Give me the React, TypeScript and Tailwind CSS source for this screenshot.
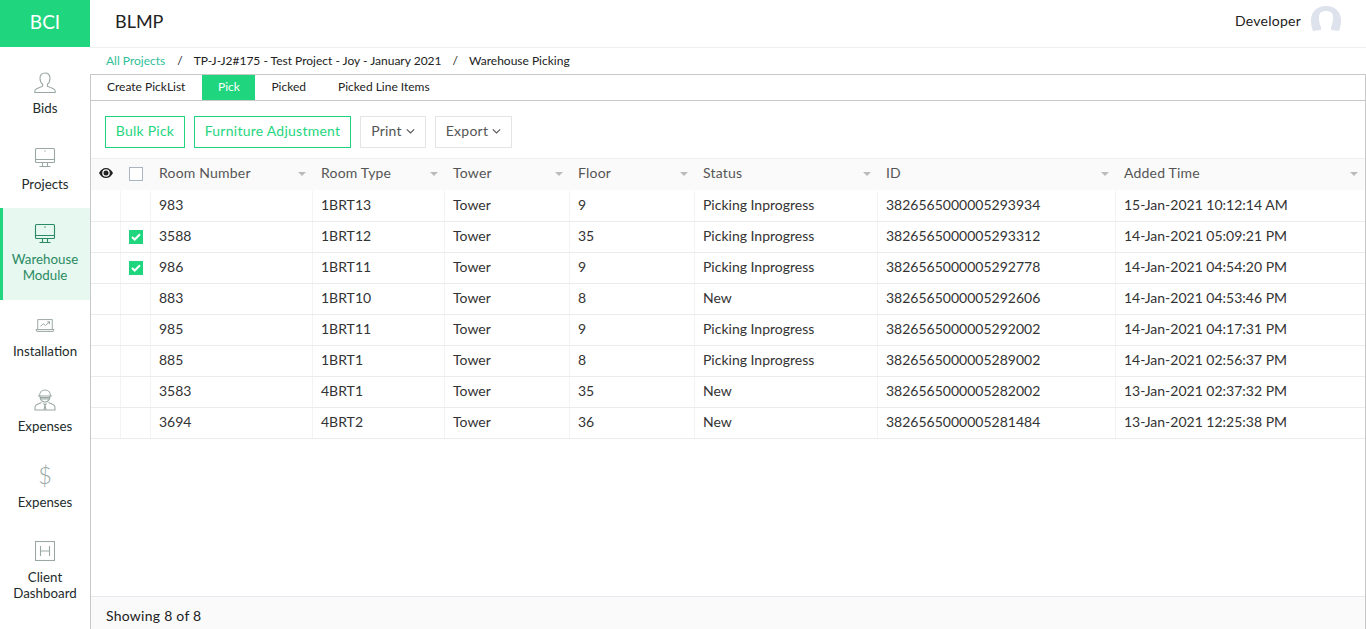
const rows = [
  { room: "983", type: "1BRT13", floor: "9", status: "Picking Inprogress", id: "3826565000005293934", time: "15-Jan-2021 10:12:14 AM", checked: false },
  { room: "3588", type: "1BRT12", floor: "35", status: "Picking Inprogress", id: "3826565000005293312", time: "14-Jan-2021 05:09:21 PM", checked: true },
  { room: "986", type: "1BRT11", floor: "9", status: "Picking Inprogress", id: "3826565000005292778", time: "14-Jan-2021 04:54:20 PM", checked: true },
  { room: "883", type: "1BRT10", floor: "8", status: "New", id: "3826565000005292606", time: "14-Jan-2021 04:53:46 PM", checked: false },
  { room: "985", type: "1BRT11", floor: "9", status: "Picking Inprogress", id: "3826565000005292002", time: "14-Jan-2021 04:17:31 PM", checked: false },
  { room: "885", type: "1BRT1", floor: "8", status: "Picking Inprogress", id: "3826565000005289002", time: "14-Jan-2021 02:56:37 PM", checked: false },
  { room: "3583", type: "4BRT1", floor: "35", status: "New", id: "3826565000005282002", time: "13-Jan-2021 02:37:32 PM", checked: false },
  { room: "3694", type: "4BRT2", floor: "36", status: "New", id: "3826565000005281484", time: "13-Jan-2021 12:25:38 PM", checked: false },
];

const columns = ["Room Number", "Room Type", "Tower", "Floor", "Status", "ID", "Added Time"];
const gridCols = "grid grid-cols-[30px_30px_162px_132px_125px_125px_183px_238px_1fr]";

function PersonIcon() {
  return (
    <svg width="22" height="22" viewBox="0 0 22 22" fill="none" stroke="currentColor" strokeWidth="1.1">
      <path d="M11 1c3 0 5 2.2 5 5.2 0 2.6-1.2 5-2.6 6.1v1.9l6 2.6c1.2.5 1.8 1.4 1.8 2.7v1H.8v-1c0-1.300.6-2.200 1.800-2.700l6-2.600v-1.900C7.200 11.200 6 8.800 6 6.200 6 3.200 8 1 11 1z" />
    </svg>
  );
}

function MonitorIcon() {
  return (
    <svg width="22" height="22" viewBox="0 0 22 22" fill="none" stroke="currentColor" strokeWidth="1.1">
      <rect x="1.500" y="1.500" width="19" height="14" rx="1" />
      <path d="M1.500 12.500h19M8.500 15.500v3.500M13.500 15.500v3.500M5.500 19.500h11" />
      <circle cx="11" cy="4" r=".7" fill="currentColor" stroke="none" />
    </svg>
  );
}

function LaptopIcon() {
  return (
    <svg width="20" height="15" viewBox="0 0 22 16" fill="none" stroke="currentColor" strokeWidth="1.1">
      <path d="M3 12V1.500h16V12M1 12.500h20l-1 2H2z" />
      <path d="M6 9l3-3 2.500 2L16 4M13.500 4H16v2.500" />
    </svg>
  );
}

function AgentIcon() {
  return (
    <svg width="22" height="22" viewBox="0 0 22 22" fill="none" stroke="currentColor" strokeWidth="1.1">
      <path d="M5.500 7c0-3.500 2.300-6 5.500-6s5.500 2.500 5.500 6M4 7h14M6 7c0 3.500 2 6 5 6s5-2.500 5-6" />
      <path d="M6.500 8.500h9v1.500h-9z" fill="currentColor" fillOpacity="0.35" />
      <path d="M7.500 13.500L3 15.500c-1.300.6-2 1.500-2 3V21h20v-2.500c0-1.500-.7-2.400-2-3l-4.500-2M9.500 14.500L11 16l1.500-1.500M11 16l-1 5M11 16l1 5" />
    </svg>
  );
}

function PickCheckbox({ checked }: { checked: boolean }) {
  if (!checked) return null;
  return (
    <div className="w-[14px] h-[14px] bg-[#1fd67e] flex items-center justify-center">
      <svg width="10" height="8" viewBox="0 0 10 8" fill="none" stroke="white" strokeWidth="2">
        <path d="M1 4l2.700 2.500L9 1.200" />
      </svg>
    </div>
  );
}

function Caret() {
  return (
    <svg width="9" height="8" viewBox="0 0 9 8" fill="none" stroke="currentColor" strokeWidth="1.100" className="ml-[4px] mt-[2px]">
      <path d="M.8 2.300L4.500 6l3.700-3.700" />
    </svg>
  );
}

function NavItem({ label, icon, h, active, iconTop = "mt-[14px]", labelTop = "mt-[6px]" }: { label: string[]; icon: React.ReactNode; h: string; active?: boolean; iconTop?: string; labelTop?: string }) {
  return (
    <div className={`${h} flex flex-col items-center ${active ? "bg-[#e6f8ef] border-l-[3px] border-[#1fd67e] text-[#2a8a63] pr-[3px]" : "text-[#1d2b2b]"}`}>
      <div className={`h-[24px] ${iconTop} flex items-center justify-center ${active ? "text-[#2a8a63]" : "text-[#9aa8a4]"}`}>{icon}</div>
      <div className={`${labelTop} text-[13.3px] leading-[16px] text-center`}>
        {label.map((l) => (
          <div key={l}>{l}</div>
        ))}
      </div>
    </div>
  );
}

function Sidebar() {
  return (
    <aside className="w-[90px] shrink-0 flex flex-col bg-white">
      <div className="h-[47px] pb-[2px] bg-[#1fd67e] text-white text-[19px] flex items-center justify-center">BCI</div>
      <div className="h-[10px]" />
      <NavItem label={["Bids"]} icon={<PersonIcon />} h="h-[75px]" labelTop="mt-[5px]" />
      <NavItem label={["Projects"]} icon={<MonitorIcon />} h="h-[76px]" />
      <NavItem label={["Warehouse", "Module"]} icon={<MonitorIcon />} h="h-[92px]" active labelTop="mt-[5px]" />
      <NavItem label={["Installation"]} icon={<LaptopIcon />} h="h-[74px]" iconTop="mt-[13px]" />
      <NavItem label={["Expenses"]} icon={<AgentIcon />} h="h-[75px]" />
      <NavItem label={["Expenses"]} icon={<span className="text-[24px] leading-none font-light">$</span>} h="h-[76px]" labelTop="mt-[7px]" />
      <NavItem
        label={["Client", "Dashboard"]}
        icon={
          <svg width="20" height="20" viewBox="0 0 20 20" fill="none" stroke="currentColor" strokeWidth="1.1">
            <rect x=".5" y=".5" width="19" height="19" />
            <path d="M5.500 5v10M14.500 5v10M5.500 10h9" />
          </svg>
        }
        h="h-[102px]"
      />
    </aside>
  );
}

function Table() {
  return (
    <div className="flex-1 text-[14px] text-[#333]">
      <div className={`${gridCols} h-[32px] bg-[#fafafa] border-t border-[#eeeeee] text-[#555] tracking-[0.2px] items-center`}>
        <div className="flex justify-center pr-[1px] pb-[3px] text-[#222]">
          <svg width="14" height="10" viewBox="0 0 14 10" fill="currentColor">
            <path fillRule="evenodd" d="M7 0C4 0 1.500 2 0 5c1.500 3 4 5 7 5s5.500-2 7-5c-1.500-3-4-5-7-5zm0 1.200a3.800 3.800 0 110 7.600 3.800 3.800 0 010-7.600z" />
            <circle cx="7" cy="5" r="2.500" />
          </svg>
        </div>
        <div className="flex justify-center pb-[1px]">
          <div className="w-[14px] h-[14px] border border-[#a9b5c0] bg-white" />
        </div>
        {columns.map((c) => (
          <div key={c} className="pl-[8px] pr-[7px] pb-[4px] flex items-center justify-between">
            <span>{c}</span>
            <span className="w-0 h-0 mt-[3px] border-x-[4px] border-x-transparent border-t-[4px] border-t-[#bbb]" />
          </div>
        ))}
      </div>
      <div className="h-[1px]" />
      {rows.map((r) => (
        <div key={r.id} className={`${gridCols} h-[31px] border-b border-[#ebebeb]`}>
          <div className="border-r border-[#f3f3f3]" />
          <div className="border-r border-[#f3f3f3] flex items-center justify-center">
            <PickCheckbox checked={r.checked} />
          </div>
          {[r.room, r.type, "Tower", r.floor, r.status, r.id, r.time].map((v, i) => (
            <div key={i} className="pl-[8px] pb-[4px] flex items-center border-r border-[#f3f3f3] last:border-r-0">
              {v}
            </div>
          ))}
        </div>
      ))}
    </div>
  );
}

export default function App() {
  return (
    <div className="h-[629px] w-[1366px] flex overflow-hidden bg-white text-[#222] font-['Lato','Liberation_Sans',sans-serif]">
      <Sidebar />
      <main className="flex-1 flex flex-col min-w-0">
        <header className="h-[48px] shrink-0 border-b border-[#f0f0f0] flex items-start justify-between pl-[25px] pr-[25px]">
          <div className="text-[18px] text-[#222] leading-[22px] mt-[10px]">BLMP</div>
          <div className="flex items-start gap-[10px]">
            <span className="text-[14px] tracking-[0.25px] leading-[18px] mt-[12px]">Developer</span>
            <svg width="30" height="25" viewBox="0 0 30 25" className="mt-[6px]">
              <path d="M2 25C.5 21.500 0 18 0 14 0 6 6 0 15 0s15 6 15 14c0 4-.5 7.500-2 11l-8-1v-3c1.500-2.500 2-6 2-10 0-4-2.500-6-7-6s-7 2-7 6c0 4 .5 7.500 2 10v3z" fill="#dde2ec" />
            </svg>
          </div>
        </header>
        <nav className="h-[26px] shrink-0 flex items-center pl-[16px] text-[12px] text-[#222]">
          <span className="text-[#2fbf9a]">All Projects</span>
          <span className="ml-[12px] mr-[11px]">/</span>
          <span>TP-J-J2#175 - Test Project - Joy - January 2021</span>
          <span className="mx-[11px]">/</span>
          <span>Warehouse Picking</span>
        </nav>
        <section className="flex-1 flex flex-col min-h-0 border-t border-l border-r border-[#c8c8c8]">
          <div className="h-[26px] shrink-0 border-b border-[#c8c8c8] flex items-stretch text-[12px] text-[#222] pl-[16px]">
            <div className="flex items-center pb-[2px] mr-[17px]">Create PickList</div>
            <div className="w-[53px] bg-[#1fd67e] text-white flex items-center justify-center pb-[2px]">Pick</div>
            <div className="flex items-center pb-[2px] ml-[16px] mr-[32px]">Picked</div>
            <div className="flex items-center pb-[2px]">Picked Line Items</div>
          </div>
          <div className="h-[57px] shrink-0 flex items-start pt-[15px] gap-[9px] pl-[14px] text-[14px]">
            <button className="h-[32px] w-[80px] pb-[4px] border border-[#1fd67e] text-[#1fd67e] tracking-[0.25px]">Bulk Pick</button>
            <button className="h-[32px] w-[157px] pb-[4px] border border-[#1fd67e] text-[#1fd67e] tracking-[0.25px]">Furniture Adjustment</button>
            <button className="h-[32px] w-[66px] pb-[4px] border border-[#e4e4e4] text-[#555] tracking-[0.25px] flex items-center justify-center">
              Print
              <Caret />
            </button>
            <button className="h-[32px] w-[77px] pb-[4px] border border-[#e4e4e4] text-[#555] tracking-[0.25px] flex items-center justify-center">
              Export
              <Caret />
            </button>
          </div>
          <Table />
          <footer className="h-[33px] shrink-0 bg-[#fafafa] border-t border-[#e6e9ee] flex items-center pt-[5px] pl-[15px] text-[14px] tracking-[0.25px] text-[#222]">
            Showing 8 of 8
          </footer>
        </section>
      </main>
    </div>
  );
}
